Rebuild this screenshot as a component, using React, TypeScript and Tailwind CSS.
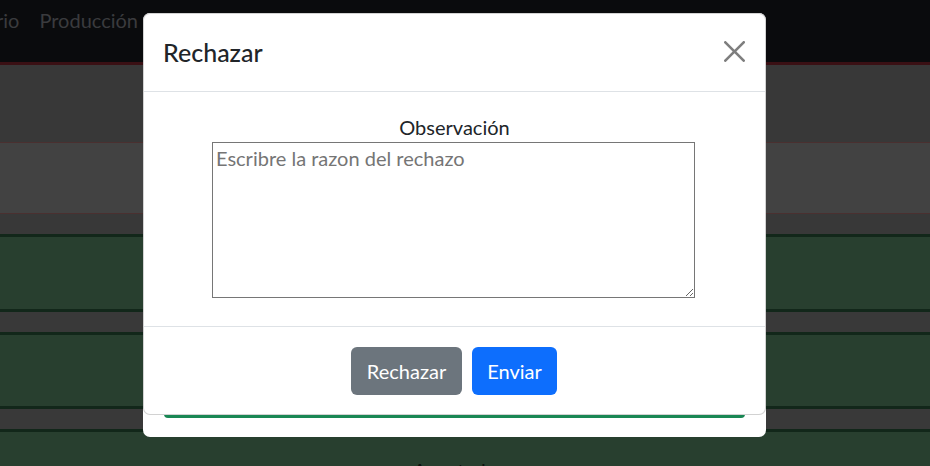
import React from "react";

function CloseIcon() {
  return (
    <svg viewBox="0 0 16 16" className="w-[21px] h-[21px]" fill="#000" opacity={0.5}>
      <path d="M.293.293a1 1 0 0 1 1.414 0L8 6.586 14.293.293a1 1 0 1 1 1.414 1.414L9.414 8l6.293 6.293a1 1 0 0 1-1.414 1.414L8 9.414l-6.293 6.293a1 1 0 0 1-1.414-1.414L6.586 8 .293 1.707a1 1 0 0 1 0-1.414z" />
    </svg>
  );
}

export default function App() {
  return (
    <div
      className="relative w-[930px] h-[466px] overflow-hidden bg-[#383838]"
      style={{ fontFamily: "Lato, 'Noto Sans', sans-serif" }}
    >
      {/* dimmed page behind */}
      <div className="flex flex-col">
        <div className="h-[65px] bg-[#0a0b0d] border-b-[3px] border-[#3a1014] flex gap-[20px] pt-[5px] text-[20px] leading-[30px] text-[#3a3b3e]">
          <span className="-ml-[4px]">rio</span>
          <span>Producción</span>
        </div>
        <div className="h-[78px] bg-[#383838] border-b border-[#4a3030]" />
        <div className="h-[71px] bg-[#424242] border-b border-[#4a3030]" />
        <div className="h-[20px] bg-[#383838]" />
        <div className="h-[78px] bg-[#283f2f] border-y-[3px] border-[#12271a]" />
        <div className="h-[20px] bg-[#393939]" />
        <div className="h-[77px] bg-[#283f2f] border-y-[3px] border-[#12271a]" />
        <div className="h-[20px] bg-[#393939]" />
        <div className="h-[60px] bg-[#283f2f] border-t-[3px] border-[#12271a] pt-[23px] pl-[413px] text-[20px] leading-[30px] text-[#0c120e]">
          Aceptado
        </div>
      </div>

      {/* back modal */}
      <div className="absolute left-[143px] top-[13px] w-[623px] h-[424px] bg-white rounded-[7px] flex flex-col justify-end px-[21px] pb-[19px]">
        <div className="h-[12px] bg-[#198754] rounded-b-[4px]" />
      </div>

      {/* front modal */}
      <div className="absolute left-[143px] top-[13px] w-[623px] h-[402px] bg-white rounded-[7px] border border-[rgba(0,0,0,0.175)] flex flex-col text-[#212529]">
        <div className="h-[78px] shrink-0 flex items-center justify-between pl-[19px] pr-[20px] border-b border-[#dee2e6]">
          <h5 className="text-[25px] leading-[37.5px] font-medium m-0">Rechazar</h5>
          <button className="w-[31px] h-[31px] flex items-center justify-center mr-[-5px] mt-[-2px]">
            <CloseIcon />
          </button>
        </div>
        <div className="h-[234px] shrink-0 flex flex-col items-center pt-[20px] px-[20px]">
          <label className="text-[20px] leading-[30px]">Observación</label>
          <textarea
            className="block w-[483px] h-[156px] -ml-[2px] border border-[#767676] px-[3px] py-[2px] text-[20px] leading-[26px] placeholder:text-[#757575] bg-white"
            style={{ fontFamily: "Lato, 'Noto Sans', sans-serif" }}
            placeholder="Escribre la razon del rechazo"
          />
        </div>
        <div className="flex-1 border-t border-[#dee2e6] flex items-center justify-center gap-[10px]">
          <button className="h-[48px] w-[111px] rounded-[6px] bg-[#6c757d] text-white text-[20px] leading-[30px] -ml-[1px]">
            Rechazar
          </button>
          <button className="h-[48px] w-[85px] rounded-[6px] bg-[#0d6efd] text-white text-[20px] leading-[30px]">
            Enviar
          </button>
        </div>
      </div>
    </div>
  );
}
